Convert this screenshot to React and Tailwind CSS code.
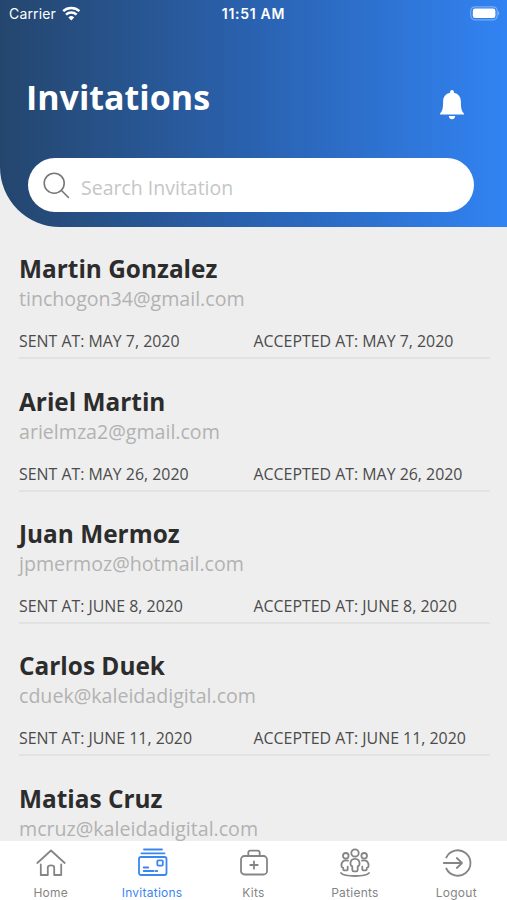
const invitations = [
    { name: 'Martin Gonzalez', email: 'tinchogon34@gmail.com', date: 'MAY 7, 2020' },
    { name: 'Ariel Martin', email: 'arielmza2@gmail.com', date: 'MAY 26, 2020' },
    { name: 'Juan Mermoz', email: 'jpmermoz@hotmail.com', date: 'JUNE 8, 2020' },
    { name: 'Carlos Duek', email: 'cduek@kaleidadigital.com', date: 'JUNE 11, 2020' },
    { name: 'Matias Cruz', email: 'mcruz@kaleidadigital.com' },
];

const HomeIcon = () => (
    <>
        <path d="M2.3 15 16 2.5 29.700 15" />
        <path d="M5.8 16.500v10.500h7v-7.500c0-2.800 6.400-2.800 6.400 0v7.500h7v-10.500" />
    </>
);

const InvitationsIcon = () => (
    <>
        <path d="M7 1.500h18M4.500 5.300h23" />
        <rect x="2" y="9" width="27.5" height="18" rx="2" />
        <rect x="20.3" y="12.3" width="5.5" height="5.3" rx="1" />
        <path d="M6.700 19.500h4.500M6.700 23h10M18.700 23h1.500" />
    </>
);

const KitsIcon = () => (
    <>
        <rect x="3" y="8" width="26" height="18.5" rx="3.5" />
        <path d="M10.300 7.500V4.700q0-2 2-2h7.400q2 0 2 2v2.800" />
        <path d="M16 13.300v7.400M12.300 17h7.400" />
    </>
);

const PatientsIcon = () => (
    <>
        <circle cx="16" cy="5" r="3.7" />
        <circle cx="6.8" cy="7.8" r="2.8" />
        <circle cx="25.2" cy="7.8" r="2.8" />
        <path d="M13.300 21.800v-3.400c-1.200-.4-1.900-1.200-1.900-2.300 0-3.600 1.900-5.300 4.600-5.300s4.600 1.700 4.600 5.300c0 1.100-.7 1.900-1.900 2.300v3.400q-.2 1.600-1.400 1.600h-2.600q-1.200 0-1.400-1.600z" />
        <path d="M9 12.700c-4.200-1.400-6.600 1.100-6.600 5.100 0 1 .7 1.800 1.800 2v1.200q.2 1.400 1.300 1.400h2.200q1 0 1-1.200v-2.500" />
        <path d="M23 12.700c4.200-1.400 6.600 1.100 6.600 5.100 0 1-.7 1.800-1.800 2v1.200q-.2 1.400-1.300 1.400h-2.200q-1 0-1-1.200v-2.500" />
        <path d="M2 25c3.400 4 24.600 4 28 0" />
    </>
);

const LogoutIcon = () => (
    <>
        <path d="M5.300 9.500a12.700 12.700 0 1 1 0 11" />
        <path d="M2.800 15h18.200M15.800 10l5.200 5-5.200 5" />
    </>
);

const tabs = [
    { label: 'Home', Icon: HomeIcon },
    { label: 'Invitations', Icon: InvitationsIcon, active: true },
    { label: 'Kits', Icon: KitsIcon },
    { label: 'Patients', Icon: PatientsIcon },
    { label: 'Logout', Icon: LogoutIcon },
];

function StatusBar() {
    return (
        <div className="grid h-[27px] grid-cols-3 items-center px-[9px] font-[Inter,sans-serif] text-[14px]">
            <div className="flex items-center gap-[6px]">
                <span className="tracking-[0.15px]">Carrier</span>
                <svg width="19" height="15" viewBox="0 0 19 15" fill="none" stroke="white" strokeWidth="2.5">
                    <path d="M1.200 5.200a12 12 0 0 1 16.200 0" />
                    <path d="M4 8.600a7.800 7.800 0 0 1 10.600 0" />
                    <path d="M9.300 14.400 6.400 11.500a4.200 4.200 0 0 1 5.800 0z" fill="white" stroke="none" />
                </svg>
            </div>
            <span className="text-center font-semibold tracking-[0.7px] whitespace-nowrap">11:51 AM</span>
            <svg className="-mr-[2px] justify-self-end" width="30" height="15" viewBox="0 0 30 15">
                <rect x=".8" y=".8" width="26.4" height="13" rx="4" fill="none" stroke="white" strokeOpacity=".35" strokeWidth="1.2" />
                <rect x="2.8" y="2.6" width="22.6" height="9.4" rx="2.3" fill="white" />
                <path d="M28.200 5q2 2.200 0 4.500z" fill="white" fillOpacity=".45" />
            </svg>
        </div>
    );
}

function Header() {
    return (
        <header className="h-[227px] shrink-0 rounded-bl-[60px] bg-linear-to-r from-[#24466e] via-[#2a62b0] to-[#3183f3] text-white">
            <StatusBar />
            <div className="flex h-[131px] items-center justify-between pr-[42px] pl-[26px]">
                <h1 className="mt-[8px] text-[34px] leading-none font-bold">Invitations</h1>
                <svg className="mt-[24px]" width="26" height="30" viewBox="0 0 26 30" fill="white">
                    <path d="M13 0c1.100 0 1.900.8 1.900 2v.8c4.400.9 7 4.200 7 8.800 0 6.600.6 9.700 3 11.700v1.100H1.100v-1.100c2.400-2 3-5.100 3-11.700 0-4.600 2.600-7.900 7-8.800V2c0-1.200.8-2 1.900-2z" />
                    <path d="M9.800 26h6.400c-.2 2-1.400 3.300-3.200 3.300S10 28 9.800 26z" />
                </svg>
            </div>
            <div className="mr-[33px] ml-[28px] flex h-[54px] items-center rounded-full bg-white pl-[15px]">
                <svg width="27" height="27" viewBox="0 0 27 27" fill="none" stroke="#777777" strokeWidth="1.6" strokeLinecap="round">
                    <circle cx="11.2" cy="11.2" r="10" />
                    <path d="m18.5 18.500 7 7" />
                </svg>
                <input
                    type="text"
                    placeholder="Search Invitation"
                    className="ml-[11px] w-[340px] pt-[5px] text-[19.5px] text-[#333] outline-none placeholder:text-[#c6c6c6]"
                />
            </div>
        </header>
    );
}

export default function App() {
    return (
        <div className="flex h-[900px] w-[507px] flex-col overflow-hidden bg-[#eeeeee] font-['Open_Sans',sans-serif]">
            <Header />

            <main className="min-h-0 flex-1 overflow-hidden pr-[17px] pl-[19px]">
                {invitations.map(({ name, email, date }) => (
                    <div key={email} className="h-[132.33px] border-b-2 border-[#e2e2e2] pt-[27.3px]">
                        <h2 className="text-[24.4px] leading-[30px] font-bold text-[#2c2c2c]">{name}</h2>
                        <p className="text-[19.6px] leading-[30px] text-[#b2b2b2]">{email}</p>
                        {date && (
                            <div className="mt-[15px] grid grid-cols-[234.5px_1fr] text-[15.9px] leading-[24px] text-[#4b4b4b]">
                                <span>SENT AT: {date}</span>
                                <span>ACCEPTED AT: {date}</span>
                            </div>
                        )}
                    </div>
                ))}
            </main>

            {/* Bottom tabs */}
            <nav className="grid h-[59px] shrink-0 grid-cols-5 bg-white">
                {tabs.map(({ label, Icon, active }) => (
                    <button
                        key={label}
                        className={`flex flex-col items-center pt-[7px] font-[Inter,sans-serif] text-[12px] leading-[16px] tracking-[0.25px] ${active ? 'text-[#3b86f0]' : 'text-[#858585]'}`}
                    >
                        <svg
                            width="32"
                            height="30"
                            viewBox="0 0 32 30"
                            fill="none"
                            stroke="currentColor"
                            strokeWidth="1.8"
                            strokeLinecap="round"
                            strokeLinejoin="round"
                            className="mb-[7px] ml-px"
                        >
                            <Icon />
                        </svg>
                        {label}
                    </button>
                ))}
            </nav>
        </div>
    );
}
